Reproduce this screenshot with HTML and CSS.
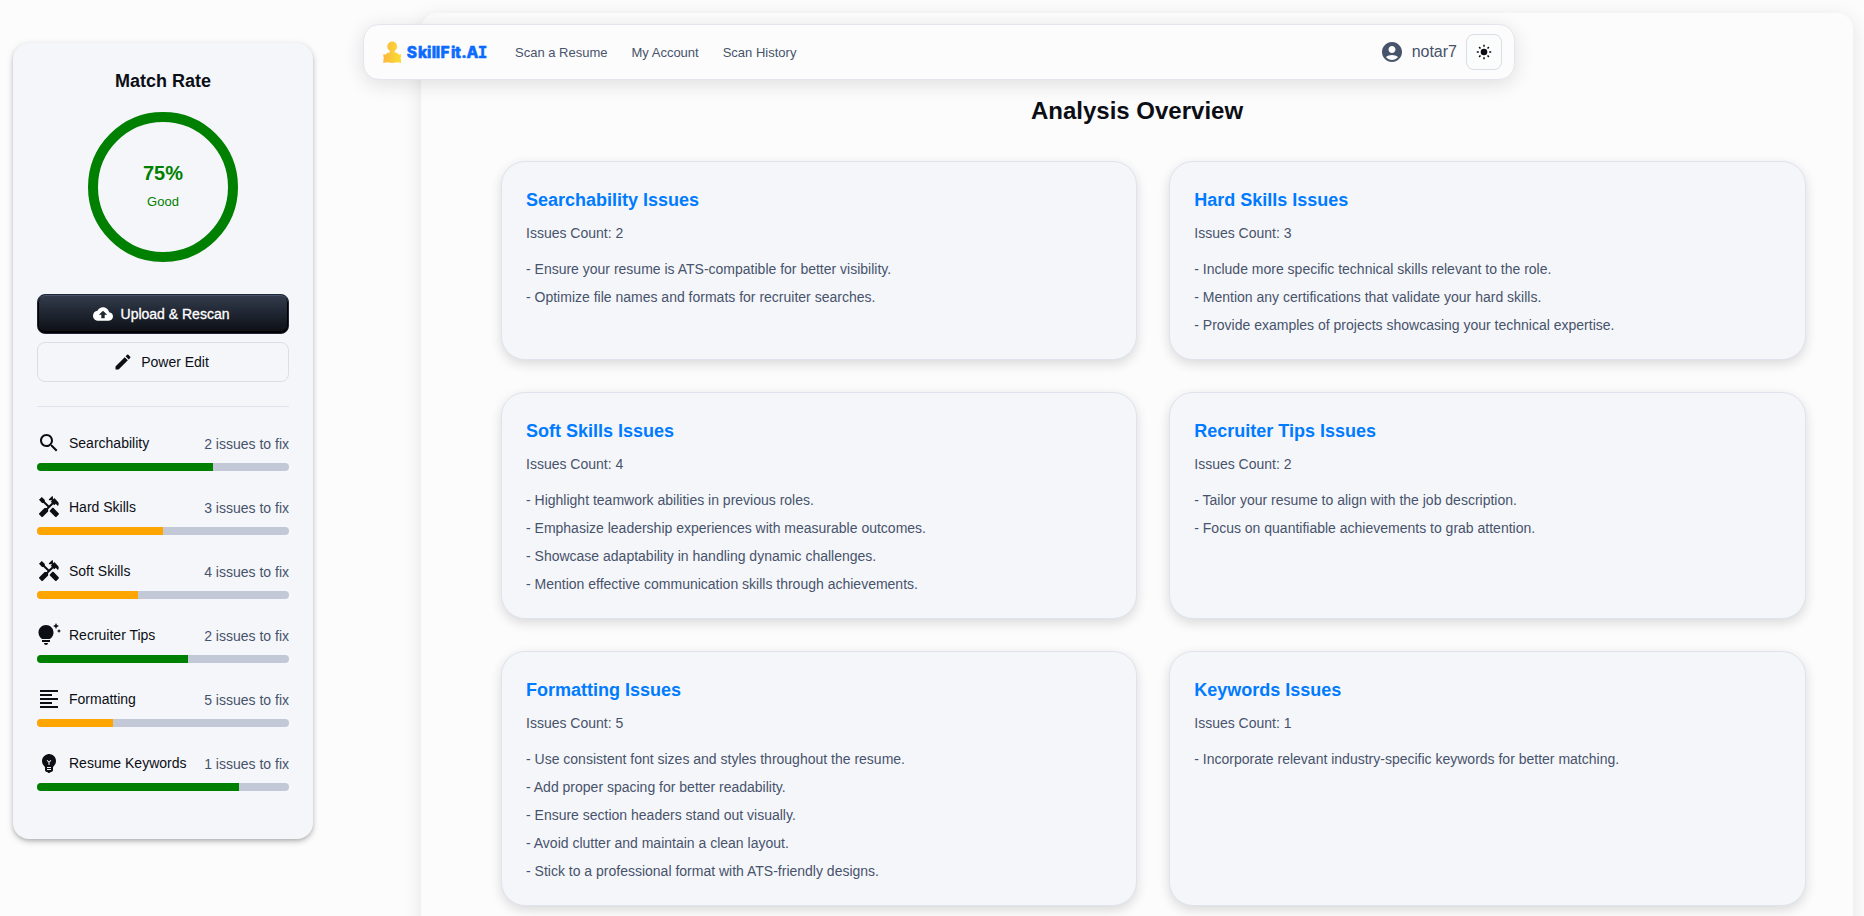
FILE: index.html
```html
<!DOCTYPE html>
<html lang="en">
<head>
<meta charset="utf-8">
<title>SkillFit.AI - Analysis Overview</title>
<link rel="stylesheet" href="styles.css">
</head>
<body>
<svg class="sprite" aria-hidden="true">
  <symbol id="tools" viewBox="0 0 24 24"><path d="M21.67 18.17l-5.3-5.3h-.99l-2.54 2.54v.99l5.3 5.3c.39.39 1.02.39 1.41 0l2.12-2.12c.39-.38.39-1.02 0-1.41z"/><path d="M17.34 10.19l1.41-1.41 2.12 2.12c1.17-1.17 1.17-3.07 0-4.24l-3.54-3.54-1.41 1.41V1.71L15.22 1l-3.54 3.54.71.71h2.83l-1.41 1.41 1.06 1.06-2.89 2.89-4.13-4.13V5.06L4.83 2.04 2 4.87 5.03 7.9h1.41l4.13 4.13-.85.85H7.6l-5.3 5.3c-.39.39-.39 1.02 0 1.41l2.12 2.12c.39.39 1.02.39 1.41 0l5.3-5.3v-2.12l5.15-5.15 1.06 1.05z"/></symbol>
</svg>

<header class="navbar">
  <svg class="logo" width="105" height="24" viewBox="0 0 105 24" role="img" aria-label="SkillFit.AI">
    <defs><linearGradient id="gold" gradientUnits="userSpaceOnUse" x1="0" x2="18" y1="0" y2="0"><stop offset="0" stop-color="#fdb53f"/><stop offset="1" stop-color="#f9de33"/></linearGradient></defs>
    <circle cx="9.200" cy="6.500" r="4.900" fill="url(#gold)"/>
    <path fill="url(#gold)" d="M6.700 10h5v2.500q3.200.2 3.900 2l2.400-.2v2.600l-.8 1 .8 1v4l-3.400-.7-5.400.8-5.400-.8-3.400.7v-4l.8-1-.8-1v-2.600l2.400.2q.7-1.800 3.900-2z"/>
    <text class="wordmark" y="18" x="23.700 35 43.900 48.700 52.800 57.400 68 72 78.200 83.400">SkillFit.A<tspan class="wordmark-i" x="94.700">I</tspan></text>
  </svg>
  <nav class="links"><a>Scan a Resume</a><a>My Account</a><a>Scan History</a></nav>
  <div class="account">
    <svg width="24" height="24" viewBox="0 0 24 24"><path d="M12 2C6.480 2 2 6.480 2 12s4.480 10 10 10 10-4.480 10-10S17.520 2 12 2zm0 4c1.930 0 3.500 1.570 3.500 3.500S13.930 13 12 13s-3.500-1.570-3.500-3.500S10.070 6 12 6zm0 14c-2.030 0-4.430-.82-6.140-2.880C7.550 15.800 9.680 15 12 15s4.450.8 6.140 2.120C16.430 19.180 14.030 20 12 20z"/></svg>
    <span class="user">notar7</span>
    <button class="theme" aria-label="Toggle theme"><svg width="16" height="16" viewBox="0 0 16 16"><circle cx="8" cy="8" r="3.300"/><path d="M8 .8v2M8 13.200v2M.8 8h2M13.200 8h2M3.100 3.100l1.400 1.400M11.500 11.500l1.400 1.400M3.100 12.900l1.400-1.400M11.500 4.500l1.400-1.400" fill="none" stroke="#0b0e14" stroke-width="1.500"/></svg></button>
  </div>
</header>

<div class="layout">
  <aside class="sidebar">
    <h2 class="side-title">Match Rate</h2>
    <div class="gauge"><span class="rate">75%</span><span class="verdict">Good</span></div>
    <button class="btn btn-primary"><svg width="20" height="20" viewBox="0 0 24 24"><path d="M19.350 10.040C18.670 6.590 15.640 4 12 4 9.110 4 6.600 5.640 5.350 8.040 2.340 8.360 0 10.910 0 14c0 3.310 2.690 6 6 6h13c2.760 0 5-2.240 5-5 0-2.640-2.050-4.780-4.650-4.960zM14 13v4h-4v-4H7l5-5 5 5h-3z"/></svg>Upload &amp; Rescan</button>
    <button class="btn btn-outline"><svg width="20" height="20" viewBox="0 0 24 24"><path d="M3 17.250V21h3.750L17.810 9.940l-3.750-3.750L3 17.250zM20.710 7.040c.39-.39.39-1.020 0-1.410l-2.340-2.340c-.39-.39-1.020-.39-1.410 0l-1.830 1.830 3.750 3.750 1.830-1.830z"/></svg>Power Edit</button>
    <hr class="rule">
    <ul class="metrics">
      <li><div class="metric"><svg viewBox="0 0 24 24"><path d="M15.500 14h-.79l-.28-.27C15.410 12.590 16 11.110 16 9.500 16 5.910 13.090 3 9.500 3S3 5.910 3 9.500 5.910 16 9.500 16c1.610 0 3.090-.59 4.230-1.570l.27.28v.79l5 4.990L20.490 19l-4.990-5zm-6 0C7.010 14 5 11.990 5 9.500S7.010 5 9.500 5 14 7.010 14 9.500 11.990 14 9.500 14z"/></svg><span class="name">Searchability</span><span class="fix">2 issues to fix</span></div><div class="bar"><div class="fill good" style="width:70%"></div></div></li>
      <li><div class="metric"><svg><use href="#tools"/></svg><span class="name">Hard Skills</span><span class="fix">3 issues to fix</span></div><div class="bar"><div class="fill warn" style="width:50%"></div></div></li>
      <li><div class="metric"><svg><use href="#tools"/></svg><span class="name">Soft Skills</span><span class="fix">4 issues to fix</span></div><div class="bar"><div class="fill warn" style="width:40%"></div></div></li>
      <li><div class="metric"><svg viewBox="0 0 24 24"><path d="M7 20h4c0 1.100-.9 2-2 2s-2-.9-2-2zm-2-1h8v-2H5v2zm11.500-9.500c0 3.820-2.660 5.860-3.770 6.500H5.270c-1.110-.64-3.770-2.680-3.770-6.500C1.500 5.360 4.860 2 9 2s7.500 3.360 7.500 7.500zm4.870-2.130L20 8l1.370.63L22 10l.63-1.370L24 8l-1.370-.63L22 6l-.63 1.370zM19 6l.94-2.060L22 3l-2.060-.94L19 0l-.94 2.060L16 3l2.060.94L19 6z"/></svg><span class="name">Recruiter Tips</span><span class="fix">2 issues to fix</span></div><div class="bar"><div class="fill good" style="width:60%"></div></div></li>
      <li><div class="metric"><svg viewBox="0 0 24 24"><path d="M15 15H3v2h12v-2zm0-8H3v2h12V7zM3 13h18v-2H3v2zm0 8h18v-2H3v2zM3 3v2h18V3H3z"/></svg><span class="name">Formatting</span><span class="fix">5 issues to fix</span></div><div class="bar"><div class="fill warn" style="width:30%"></div></div></li>
      <li><div class="metric"><svg viewBox="0 0 24 24"><path d="M12 3c-.46 0-.93.04-1.400.14-2.760.53-4.960 2.760-5.480 5.520-.48 2.610.48 5.010 2.220 6.560.43.38.66.91.66 1.470V19c0 1.100.9 2 2 2h.28c.35.6.98 1 1.720 1s1.380-.4 1.720-1H14c1.100 0 2-.9 2-2v-2.310c0-.55.22-1.090.64-1.460C18.090 13.950 19 12.080 19 10c0-3.870-3.130-7-7-7zm2 16h-4v-1h4v1zm0-2h-4v-1h4v1zm-1.500-5.590V14h-1v-2.590L9.670 9.590l.71-.71L12 10.500l1.620-1.620.71.71-1.830 1.820z"/></svg><span class="name">Resume Keywords</span><span class="fix">1 issues to fix</span></div><div class="bar"><div class="fill good" style="width:80%"></div></div></li>
    </ul>
  </aside>

  <main class="panel">
    <h1 class="title">Analysis Overview</h1>
    <div class="cards">
      <section class="card"><h3>Searchability Issues</h3><p>Issues Count: 2</p><ul><li>- Ensure your resume is ATS-compatible for better visibility.</li><li>- Optimize file names and formats for recruiter searches.</li></ul></section>
      <section class="card"><h3>Hard Skills Issues</h3><p>Issues Count: 3</p><ul><li>- Include more specific technical skills relevant to the role.</li><li>- Mention any certifications that validate your hard skills.</li><li>- Provide examples of projects showcasing your technical expertise.</li></ul></section>
      <section class="card"><h3>Soft Skills Issues</h3><p>Issues Count: 4</p><ul><li>- Highlight teamwork abilities in previous roles.</li><li>- Emphasize leadership experiences with measurable outcomes.</li><li>- Showcase adaptability in handling dynamic challenges.</li><li>- Mention effective communication skills through achievements.</li></ul></section>
      <section class="card"><h3>Recruiter Tips Issues</h3><p>Issues Count: 2</p><ul><li>- Tailor your resume to align with the job description.</li><li>- Focus on quantifiable achievements to grab attention.</li></ul></section>
      <section class="card"><h3>Formatting Issues</h3><p>Issues Count: 5</p><ul><li>- Use consistent font sizes and styles throughout the resume.</li><li>- Add proper spacing for better readability.</li><li>- Ensure section headers stand out visually.</li><li>- Avoid clutter and maintain a clean layout.</li><li>- Stick to a professional format with ATS-friendly designs.</li></ul></section>
      <section class="card"><h3>Keywords Issues</h3><p>Issues Count: 1</p><ul><li>- Incorporate relevant industry-specific keywords for better matching.</li></ul></section>
    </div>
  </main>
</div>
</body>
</html>
```
FILE: styles.css
```css
* { box-sizing: border-box; }
body {
  margin: 0;
  height: 100vh;
  overflow: hidden;
  background: #fcfcfc;
  color: #0b0e14;
  font-family: "Liberation Sans", Arial, sans-serif;
  font-size: 14px;
}
h1, h2, h3, p, ul { margin: 0; padding: 0; }
ul { list-style: none; }
svg { flex: none; fill: currentColor; }
.sprite { display: none; }

/* Floating navigation, over the content panel */
.navbar {
  position: absolute;
  z-index: 2;
  top: 24px;
  left: 363px;
  width: 1152px;
  height: 56px;
  display: flex;
  align-items: center;
  padding: 0 12px 0 19px;
  border: 1px solid #e4e6ef;
  border-radius: 16px;
  background: #fcfcfc;
  box-shadow: 0 4px 20px rgba(0, 0, 0, .12);
}
.wordmark { font: 800 15.500px Inter, sans-serif; fill: #0b6bff; stroke: #0b6bff; stroke-width: .5px; }
.wordmark-i { font: 700 16px "DejaVu Sans Mono", monospace; }
.links { display: flex; gap: 24px; margin-left: 27px; font-size: 13px; color: #47536b; }
.account { display: flex; align-items: center; margin-left: auto; color: #47536b; }
.user { margin: 0 9px 0 8px; font-size: 16px; }
.theme {
  display: grid;
  place-items: center;
  width: 36px;
  height: 36px;
  padding: 0;
  border: 1px solid #dadee7;
  border-radius: 8px;
  background: #fbfcfc;
  color: #0b0e14;
}

.layout { display: flex; align-items: flex-start; padding: 13px 11px 0 13px; }
.sidebar {
  flex: none;
  width: 300px;
  height: 796px;
  margin-top: 30px;
  padding: 24px;
  border-radius: 16px;
  background: #f5f6fa;
  box-shadow: 0 2px 4px -1px rgba(0, 0, 0, .2), 0 3px 6px rgba(0, 0, 0, .14), 0 1px 10px rgba(0, 0, 0, .06);
}
.side-title { font-size: 18px; line-height: 28px; text-align: center; }
.gauge {
  display: flex;
  flex-direction: column;
  align-items: center;
  width: 150px;
  height: 150px;
  margin: 17px auto 32px;
  padding-top: 36px;
  border: 10px solid #008000;
  border-radius: 50%;
  color: #008000;
}
.rate { font-size: 20px; font-weight: 700; line-height: 30px; }
.verdict { font-size: 13px; line-height: 28px; }
.btn {
  display: flex;
  align-items: center;
  justify-content: center;
  gap: 8px;
  width: 100%;
  height: 40px;
  padding: 0 4px 0 0;
  border-radius: 8px;
  font: 14px "Liberation Sans", Arial, sans-serif;
}
.btn-primary {
  border: 1px solid #1f2737;
  background: linear-gradient(#333c4d, #0b0e14);
  box-shadow: inset 0 1px 0 #47536b, inset 0 -2px 0 #000, inset 1px 0 0 #000, inset -1px 0 0 #000;
  color: #fff;
  -webkit-text-stroke: .3px #fff;
}
.btn-outline { margin-top: 8px; border: 1px solid #dadee7; background: transparent; color: #0b0e14; }
.rule { height: 1px; margin: 24px 0; border: 0; background: #dfe2ec; }
.metrics { display: grid; gap: 24px; }
.metric { display: flex; align-items: center; height: 24px; margin-bottom: 8px; }
.metric svg { width: 24px; height: 24px; margin-right: 8px; }
.name { line-height: 20px; margin-top: -1px; }
.fix { margin-left: auto; padding-top: 1px; color: #47536b; }
.bar { height: 8px; border-radius: 4px; background: #c2c8d6; overflow: hidden; }
.fill { height: 100%; }
.good { background: #008000; }
.warn { background: #ffa500; }

.panel {
  flex: 1;
  height: 960px;
  margin-left: 108px;
  padding: 80px 47.500px 0 80px;
  border-radius: 16px;
  background: #fcfcfc;
  box-shadow: 0 4px 20px rgba(0, 0, 0, .1);
}
.title { margin: 0 -47.500px 0 -80px; font-size: 24px; line-height: 36px; text-align: center; }
.cards { display: grid; grid-template-columns: 1fr 1fr; gap: 32px; margin-top: 32px; }
.card {
  padding: 24px;
  border: 1px solid #e0e3ed;
  border-radius: 24px;
  background: #f5f6fa;
  box-shadow: 0 4px 12px rgba(0, 0, 0, .14);
}
.card h3 { font-size: 18px; line-height: 29px; color: #007bff; }
.card p { margin: 8px 0 16px; line-height: 20px; color: #47536b; }
.card ul { display: grid; gap: 8px; }
.card li { line-height: 20px; color: #47536b; }
```
